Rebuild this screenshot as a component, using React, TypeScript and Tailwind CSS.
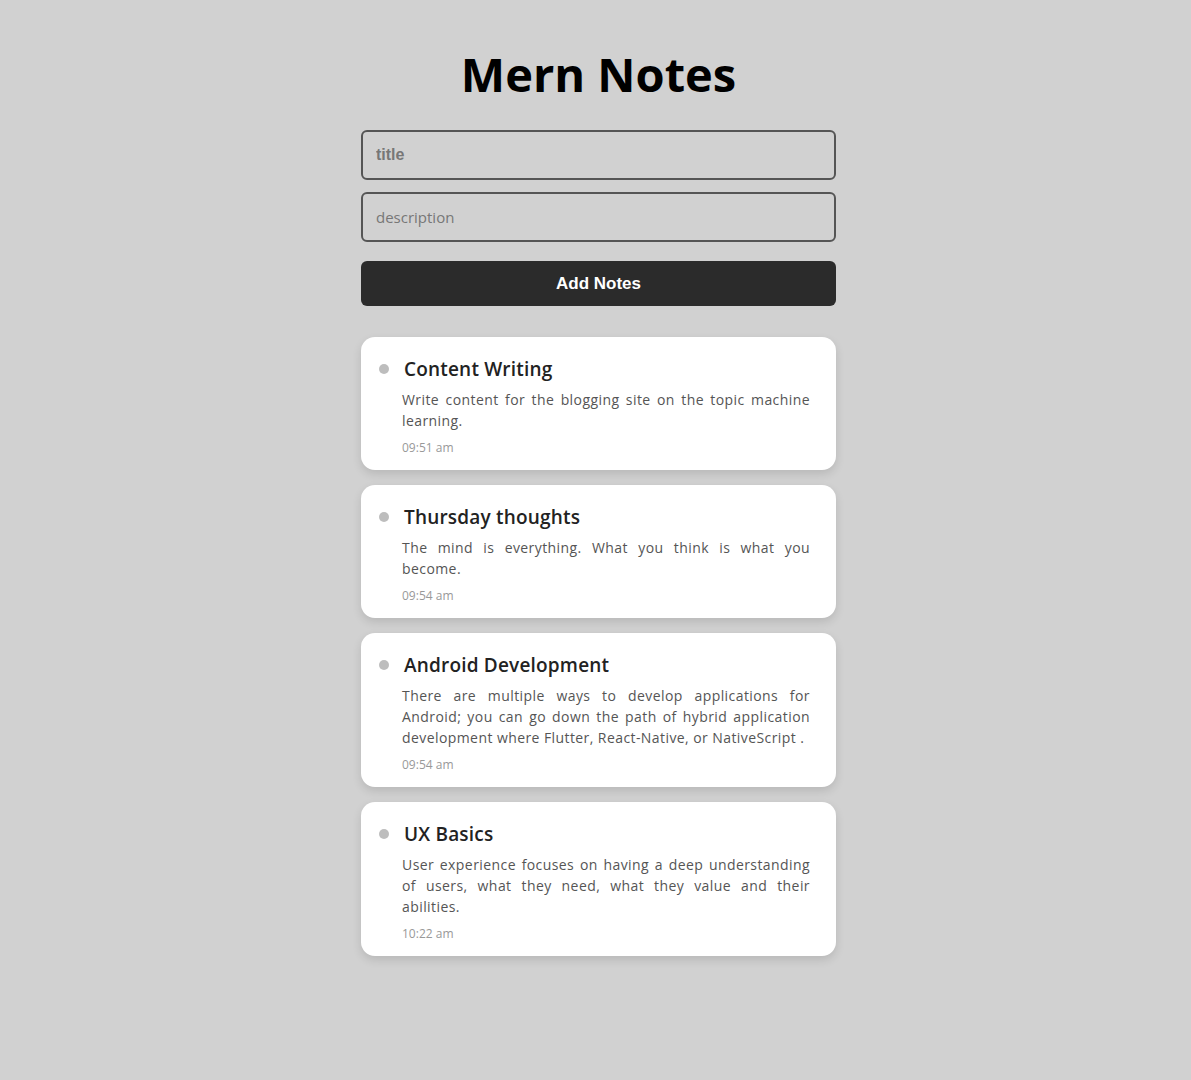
const notes = [
  {
    title: 'Content Writing',
    description: 'Write content for the blogging site on the topic machine learning.',
    time: '09:51 am',
  },
  {
    title: 'Thursday thoughts',
    description: 'The mind is everything. What you think is what you become.',
    time: '09:54 am',
  },
  {
    title: 'Android Development',
    description:
      'There are multiple ways to develop applications for Android; you can go down the path of hybrid application development where Flutter, React-Native, or NativeScript .',
    time: '09:54 am',
  },
  {
    title: 'UX Basics',
    description:
      'User experience focuses on having a deep understanding of users, what they need, what they value and their abilities.',
    time: '10:22 am',
  },
]

function NoteCard({ title, description, time }: { title: string; description: string; time: string }) {
  return (
    <div className="bg-white rounded-[14px] shadow-[0_4px_10px_rgba(0,0,0,0.12)] pt-[18px] pb-[14px] pl-[18px] pr-[26px]">
      <div className="flex items-center">
        <span className="w-[10px] h-[10px] rounded-full bg-[#bdbdbd] shrink-0" />
        <h2 className="ml-[15px] text-[19px] font-semibold text-[#222] leading-[28px] tracking-[0.01em]">{title}</h2>
      </div>
      <div className="pl-[23px]">
        <p className="mt-[6px] text-[14px] leading-[21px] text-[#555] text-justify tracking-[0.03em]">{description}</p>
        <p className="mt-[9px] text-[12px] leading-[16px] text-[#999]">{time}</p>
      </div>
    </div>
  )
}

export default function App() {
  return (
    <div className="min-h-screen bg-[#d1d1d1] flex flex-col items-center pt-[40px] pb-16 pl-[6px] font-['Open_Sans',sans-serif]">
      <h1 className="text-[47px] font-bold text-black leading-[68px] font-['Open_Sans',sans-serif]">Mern Notes</h1>

      <div className="w-[475px] mt-[22px] flex flex-col">
        <input
          placeholder="title"
          className="h-[50px] w-full border-2 border-[#555] rounded-[6px] bg-transparent px-[13px] text-[16px] font-bold font-['Liberation_Sans',sans-serif] placeholder:text-[#777] outline-none"
        />
        <input
          placeholder="description"
          className="mt-[12px] h-[50px] w-full border-2 border-[#555] rounded-[6px] bg-transparent px-[13px] text-[15px] placeholder:text-[#777] outline-none"
        />
        <button className="mt-[19px] h-[45px] w-full rounded-[6px] bg-[#2b2b2b] text-white text-[17px] font-bold font-['Liberation_Sans',sans-serif]">
          Add Notes
        </button>

        <div className="mt-[31px] flex flex-col gap-[15px]">
          {notes.map((n) => (
            <NoteCard key={n.title} {...n} />
          ))}
        </div>
      </div>
    </div>
  )
}
